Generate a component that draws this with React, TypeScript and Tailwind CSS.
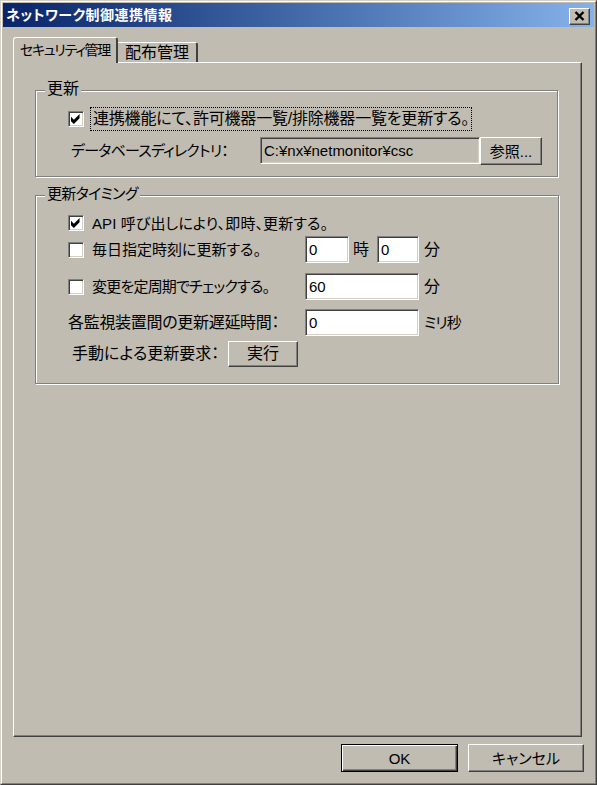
import React from "react";

const face = "bg-[#c0bcb1]";
const font = "font-['Liberation_Sans','Noto_Sans_CJK_JP',sans-serif] [font-feature-settings:'palt']";
const raised =
  "border border-t-white border-l-white border-r-[#404040] border-b-[#404040] shadow-[inset_-1px_-1px_0_#808080]";
const sunken =
  "border border-t-[#808080] border-l-[#808080] border-r-white border-b-white shadow-[inset_1px_1px_0_#404040,inset_-1px_-1px_0_#d4d0c8]";
const etched = "border border-[#808080] shadow-[inset_1px_1px_0_#fff,1px_1px_0_#fff]";

function CheckBox({ checked }: { checked?: boolean }) {
  return (
    <div className={`w-[16px] h-[16px] shrink-0 bg-white ${sunken} flex items-center justify-center`}>
      {checked && (
        <svg width="10" height="10" viewBox="0 0 7 7">
          <path d="M0 2 L2 4 L6 0 L6 3 L2 7 L0 5 Z" fill="black" />
        </svg>
      )}
    </div>
  );
}

function Group({
  title,
  titleClass,
  className,
  children,
}: {
  title: string;
  titleClass?: string;
  className?: string;
  children: React.ReactNode;
}) {
  return (
    <div className={`relative ${etched} ${className ?? ""}`}>
      <div
        className={`absolute -top-[12px] left-[9px] px-[2px] h-[20px] leading-[20px] whitespace-nowrap ${face} ${titleClass ?? ""}`}
      >
        {title}
      </div>
      {children}
    </div>
  );
}

function TextBox({ value, width, gray }: { value: string; width: string; gray?: boolean }) {
  return (
    <div
      className={`${width} h-[27px] ${sunken} ${gray ? face : "bg-white"} text-[15px] flex items-center pl-[3px] leading-none`}
    >
      {value}
    </div>
  );
}

function Button({ label, className }: { label: string; className: string }) {
  return (
    <button
      className={`${className} ${face} ${raised} flex items-center justify-center text-[15px] leading-none whitespace-nowrap`}
    >
      {label}
    </button>
  );
}

export default function App() {
  return (
    <div
      className={`w-[597px] h-[785px] ${face} ${font} text-black border border-t-[#d4d0c8] border-l-[#d4d0c8] border-r-[#404040] border-b-[#404040] flex flex-col`}
    >
      <div className="flex-1 border border-t-white border-l-white border-r-[#808080] border-b-[#808080] p-px flex flex-col">
        {/* title bar */}
        <div className="h-[24px] bg-linear-to-r from-[#0a246a] to-[#86b2ea] flex items-center pl-[3px] pr-[4px]">
          <span className="text-white font-bold text-[14px] tracking-[0.5px] leading-none whitespace-nowrap">
            ネットワーク制御連携情報
          </span>
          <div className="flex-1" />
          <div className={`w-[21px] h-[17px] ${face} ${raised} flex items-center justify-center mt-[2px]`}>
            <svg width="11" height="10" viewBox="0 0 11 10">
              <path d="M1.5 1 L9.5 9 M9.5 1 L1.5 9" stroke="black" strokeWidth="2.4" />
            </svg>
          </div>
        </div>

        {/* tabs */}
        <div className="mt-[10px] ml-[10px] flex items-end h-[25px]">
          <div
            className={`relative z-10 -mb-px w-[105px] h-[26px] ${face} border-l border-t border-white border-r-2 border-r-[#404040] rounded-t-[3px] flex items-center justify-center text-[14px] tracking-[-1.3px] leading-none whitespace-nowrap pb-[1px]`}
          >
            セキュリティ管理
          </div>
          <div
            className={`w-[80px] h-[20px] ${face} border-t border-white border-r-2 border-r-[#404040] rounded-tr-[3px] flex items-center justify-center text-[16px] leading-none whitespace-nowrap`}
          >
            配布管理
          </div>
        </div>

        {/* panel */}
        <div className={`ml-[10px] w-[569px] h-[675px] ${face} ${raised} flex flex-col pl-[21px] text-[15px]`}>
          <Group title="更新" titleClass="text-[16px]" className="mt-[27px] w-[523px] h-[87px] flex flex-col">
            <div className="mt-[16px] h-[24px] pl-[32px] flex items-center">
              <CheckBox checked />
              <span className="ml-[6px] h-[24px] px-[2px] border border-dotted border-black flex items-center leading-none text-[16px] tracking-[-0.2px] whitespace-nowrap">
                連携機能にて、許可機器一覧/排除機器一覧を更新する。
              </span>
            </div>
            <div className="mt-[6px] pl-[35px] flex items-start">
              <span className="w-[189px] h-[27px] flex items-center leading-none tracking-[-0.8px] whitespace-nowrap">
                データベースディレクトリ：
              </span>
              <TextBox value="C:¥nx¥netmonitor¥csc" width="w-[220px]" gray />
              <Button label="参照..." className="w-[62px] h-[28px]" />
            </div>
          </Group>

          <Group
            title="更新タイミング"
            titleClass="tracking-[-0.7px]"
            className="mt-[18px] w-[524px] h-[189px] flex flex-col"
          >
            <div className="mt-[15px] h-[24px] pl-[32px] flex items-center">
              <CheckBox checked />
              <span className="ml-[8px] leading-none whitespace-nowrap tracking-[0.1px]">
                API 呼び出しにより、即時、更新する。
              </span>
            </div>
            <div className="mt-[1px] h-[27px] pl-[32px] flex items-center">
              <div className="w-[237px] flex items-center">
                <CheckBox />
                <span className="ml-[8px] leading-none whitespace-nowrap">毎日指定時刻に更新する。</span>
              </div>
              <TextBox value="0" width="w-[44px]" />
              <span className="ml-[4px] w-[15px] leading-none text-[16px]">時</span>
              <div className="ml-[9px]">
                <TextBox value="0" width="w-[42px]" />
              </div>
              <span className="ml-[5px] leading-none text-[16px]">分</span>
            </div>
            <div className="mt-[10px] h-[27px] pl-[32px] flex items-center">
              <div className="w-[237px] flex items-center">
                <CheckBox />
                <span className="ml-[8px] leading-none whitespace-nowrap tracking-[-0.8px]">
                  変更を定周期でチェックする。
                </span>
              </div>
              <TextBox value="60" width="w-[114px]" />
              <span className="ml-[5px] leading-none text-[16px]">分</span>
            </div>
            <div className="mt-[9px] h-[27px] pl-[32px] flex items-center">
              <span className="w-[237px] leading-none whitespace-nowrap text-[16px] tracking-[-0.3px]">
                各監視装置間の更新遅延時間：
              </span>
              <TextBox value="0" width="w-[114px]" />
              <span className="ml-[5px] leading-none whitespace-nowrap tracking-[-1px]">ミリ秒</span>
            </div>
            <div className="mt-[5px] h-[26px] pl-[36px] flex items-center">
              <span className="w-[156px] leading-none whitespace-nowrap text-[16px]">手動による更新要求：</span>
              <Button label="実行" className="w-[70px] h-[26px] text-[16px]" />
            </div>
          </Group>
        </div>

        {/* dialog buttons */}
        <div className="mt-[7px] pr-[10px] flex justify-end">
          <button
            className={`w-[117px] h-[28px] ${face} border border-black shadow-[inset_1px_1px_0_#fff,inset_-1px_-1px_0_#404040,inset_-2px_-2px_0_#808080] flex items-center justify-center text-[15px] leading-none`}
          >
            OK
          </button>
          <Button label="キャンセル" className="ml-[10px] w-[116px] h-[28px]" />
        </div>
      </div>
    </div>
  );
}
